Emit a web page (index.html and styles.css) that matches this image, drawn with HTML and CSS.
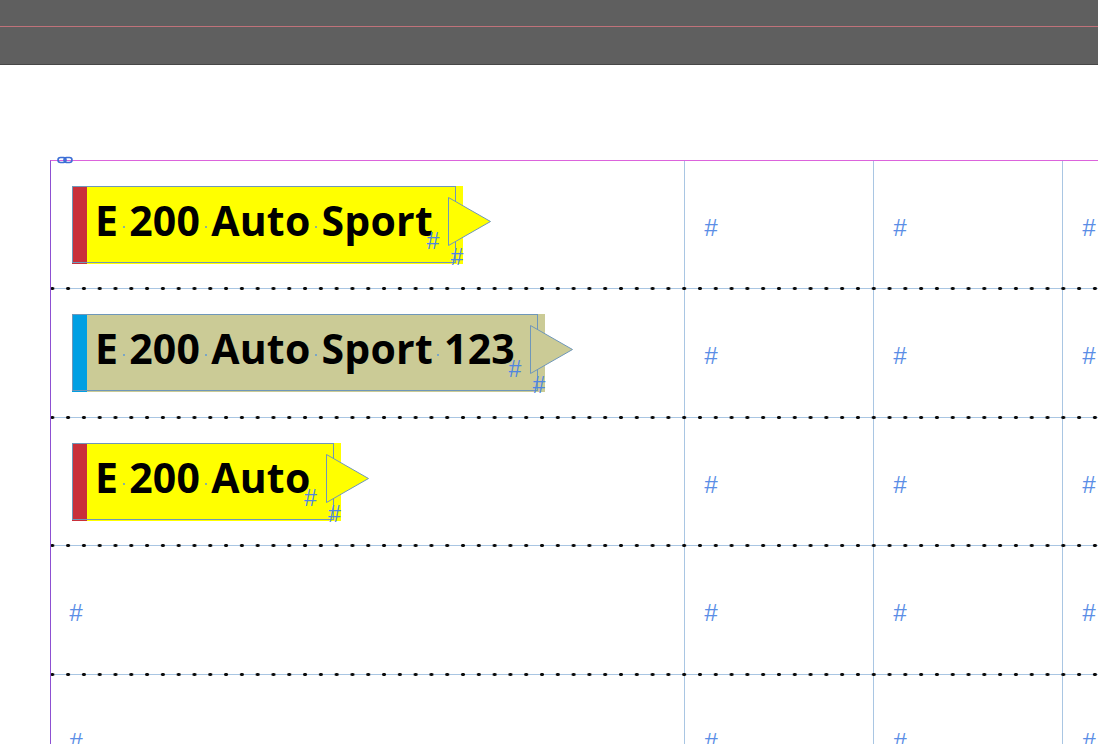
FILE: index.html
```html
<!DOCTYPE html>
<html>
<head>
<meta charset="utf-8">
<link rel="stylesheet" href="styles.css">
</head>
<body>
<div class="topbar"><div class="guide"></div></div>
<div class="canvas">
  <div class="table">
    <svg class="link" width="16" height="8" viewBox="0 0 16 8"><rect x="1" y="1.5" width="8" height="5" rx="2.5" fill="none" stroke="#3d6fd6" stroke-width="1.6"/><rect x="7" y="1.5" width="8" height="5" rx="2.5" fill="none" stroke="#3d6fd6" stroke-width="1.6"/></svg>

    <div class="row h127">
      <div class="cell first">
        <div class="label">
          <span class="bar red"></span>
          <span class="fill yellow"><span class="txt">E<span class="sp"> </span>200<span class="sp"> </span>Auto<span class="sp"> </span>Sport</span></span>
          <svg class="tri" width="44" height="50" viewBox="0 0 44 50"><polygon points="0.5,0.5 0.5,48.5 42.5,24.5" fill="#ffff00" stroke="#6f97b9" stroke-width="1"/></svg>
          <span class="ov ov1">#</span>
          <span class="ov ov2">#</span>
        </div>
      </div>
      <div class="cell"><span class="hash">#</span></div>
      <div class="cell"><span class="hash">#</span></div>
      <div class="cell"><span class="hash">#</span></div>
    </div>
    <div class="sep"></div>

    <div class="row h128">
      <div class="cell first">
        <div class="label">
          <span class="bar blue"></span>
          <span class="fill khaki"><span class="txt">E<span class="sp"> </span>200<span class="sp"> </span>Auto<span class="sp"> </span>Sport<span class="sp"> </span>123</span></span>
          <svg class="tri" width="44" height="50" viewBox="0 0 44 50"><polygon points="0.5,0.5 0.5,48.5 42.5,24.5" fill="#cbcb96" stroke="#6f97b9" stroke-width="1"/></svg>
          <span class="ov ov1">#</span>
          <span class="ov ov2">#</span>
        </div>
      </div>
      <div class="cell"><span class="hash">#</span></div>
      <div class="cell"><span class="hash">#</span></div>
      <div class="cell"><span class="hash">#</span></div>
    </div>
    <div class="sep"></div>

    <div class="row h127">
      <div class="cell first">
        <div class="label">
          <span class="bar red"></span>
          <span class="fill yellow"><span class="txt">E<span class="sp"> </span>200<span class="sp"> </span>Auto</span></span>
          <svg class="tri" width="44" height="50" viewBox="0 0 44 50"><polygon points="0.5,0.5 0.5,48.5 42.5,24.5" fill="#ffff00" stroke="#6f97b9" stroke-width="1"/></svg>
          <span class="ov ov1">#</span>
          <span class="ov ov2">#</span>
        </div>
      </div>
      <div class="cell"><span class="hash">#</span></div>
      <div class="cell"><span class="hash">#</span></div>
      <div class="cell"><span class="hash">#</span></div>
    </div>
    <div class="sep"></div>

    <div class="row h128">
      <div class="cell first"><span class="hash">#</span></div>
      <div class="cell"><span class="hash">#</span></div>
      <div class="cell"><span class="hash">#</span></div>
      <div class="cell"><span class="hash">#</span></div>
    </div>
    <div class="sep"></div>

    <div class="row h128">
      <div class="cell first"><span class="hash">#</span></div>
      <div class="cell"><span class="hash">#</span></div>
      <div class="cell"><span class="hash">#</span></div>
      <div class="cell"><span class="hash">#</span></div>
    </div>
  </div>
</div>
</body>
</html>
```

FILE: styles.css
```css
html, body {
  margin: 0;
  padding: 0;
  width: 1098px;
  height: 744px;
  overflow: hidden;
  background: #ffffff;
  font-family: "Open Sans", "Liberation Sans", sans-serif;
}

.topbar {
  height: 65px;
  background: #5f5f5f;
  border-bottom: 1px solid #474747;
  padding-top: 26px;
  box-sizing: border-box;
}
.guide {
  height: 1px;
  background: #c0727a;
}

.canvas {
  height: 679px;
  overflow: hidden;
  padding: 95px 0 0 50px;
  box-sizing: border-box;
}

.table {
  position: relative;
  width: 1202px;
  border-top: 1px solid #dc64dc;
  border-left: 1px solid #8d50d2;
}

.link {
  position: absolute;
  left: 6px;
  top: -5px;
}

.row {
  display: grid;
  grid-template-columns: 634px 189px 189px 189px;
}
.h127 { height: 127px; }
.h128 { height: 128px; }

.cell {
  border-right: 1px solid #a9c6e3;
  padding: 57px 0 0 19px;
  box-sizing: border-box;
}
.cell.first {
  padding: 25px 0 0 21px;
}
.cell.first > .hash {
  display: block;
  margin: 32px 0 0 -3px;
}

.hash {
  font-family: "Liberation Sans", sans-serif;
  font-style: italic;
  font-weight: 300;
  font-size: 24px;
  line-height: 20px;
  color: #5b8ee6;
}

.sep {
  position: relative;
  height: 1px;
  background: #a9c6e3;
}
.sep::after {
  content: "";
  position: absolute;
  left: 0;
  right: 0;
  top: -2px;
  height: 5px;
  background-image: radial-gradient(ellipse 2.4px 1.8px at center, #0a0a0a 70%, rgba(0,0,0,0) 100%);
  background-size: 15.8px 5px;
  background-position: -6.6px 0;
  background-repeat: repeat-x;
}

.label {
  position: relative;
  display: inline-flex;
  height: 78px;
}
.label::before {
  content: "";
  position: absolute;
  left: 0;
  top: 0;
  right: 7px;
  bottom: 1px;
  border: 1px solid #6f97b9;
  z-index: 2;
}
.bar {
  width: 15px;
}
.red { background: #c9303a; }
.blue { background: #009fe3; }

.fill {
  padding: 0 30px 0 8px;
  height: 78px;
}
.yellow { background: #ffff00; }
.khaki { background: #cbcb96; }

.txt {
  display: block;
  font-family: "Open Sans", sans-serif;
  font-weight: 700;
  font-size: 41px;
  line-height: 69px;
  color: #000;
  white-space: nowrap;
  letter-spacing: 0.25px;
}
.sp {
  position: relative;
}
.sp::after {
  content: "";
  position: absolute;
  left: 50%;
  top: 34px;
  width: 2px;
  height: 2px;
  margin-left: -1px;
  border-radius: 50%;
  background: #5f9ad6;
}

.tri {
  position: absolute;
  left: calc(100% - 15px);
  top: 11px;
  z-index: 3;
}

.ov {
  position: absolute;
  font-family: "Liberation Sans", sans-serif;
  font-style: italic;
  font-size: 23px;
  line-height: 16px;
  color: #4f86e0;
  z-index: 4;
}
.ov1 {
  right: 24px;
  top: 47px;
}
.ov2 {
  right: 0;
  top: 63px;
}
```
